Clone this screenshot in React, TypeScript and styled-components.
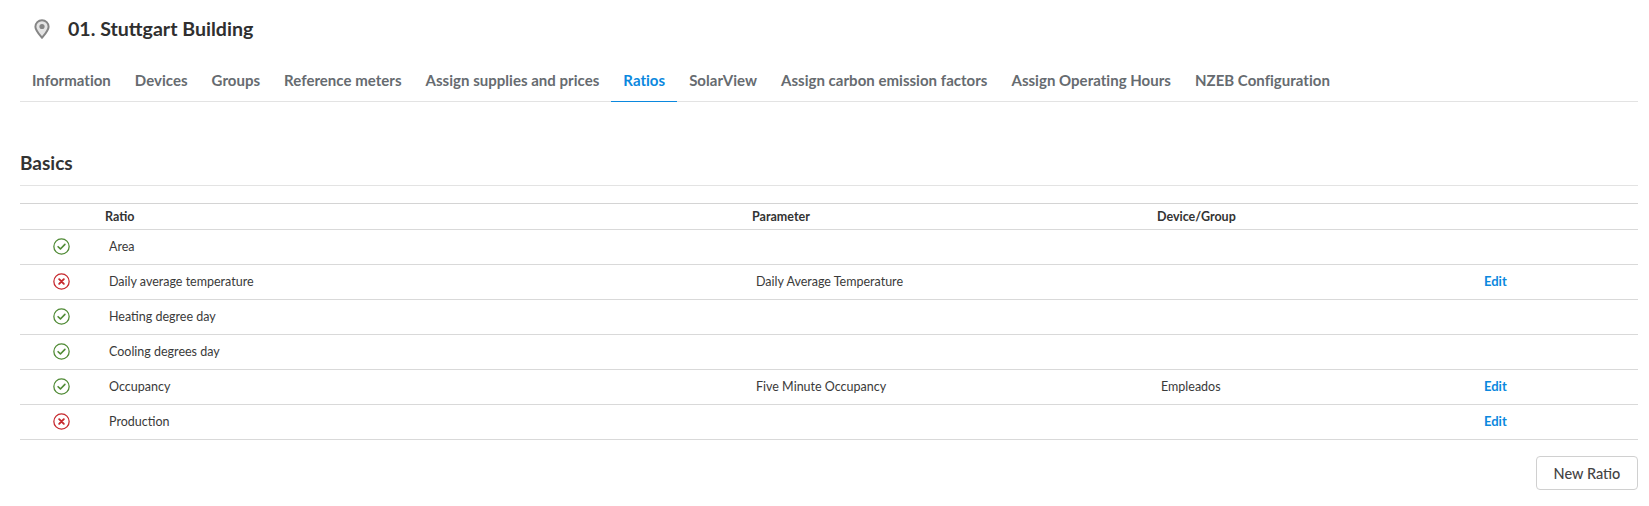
import * as React from 'react';
import styled, { createGlobalStyle } from 'styled-components';

const GlobalStyle = createGlobalStyle`
  html, body {
    margin: 0;
    background: #fff;
    font-family: "Lato", "Noto Sans", sans-serif;
    color: #333;
  }
`;

const Page = styled.div`
  width: 1649px;
  height: 506px;
  padding: 0 11px 0 20px;
  box-sizing: border-box;
  overflow: hidden;
`;

const Header = styled.div`
  display: flex;
  align-items: center;
  height: 58px;
  padding-left: 14px;
  gap: 18px;
`;

const Title = styled.h1`
  margin: 0 0 1px;
  font-size: 19.600px;
  font-weight: 700;
  color: #2f2f2f;
`;

const Tabs = styled.div`
  display: flex;
  height: 44px;
  box-sizing: border-box;
  border-bottom: 1px solid #e3e3e3;
`;

const Tab = styled.div<{ $active?: boolean }>`
  padding: 0 12px;
  line-height: 44px;
  height: 44px;
  box-sizing: border-box;
  font-size: 15px;
  font-weight: 700;
  letter-spacing: 0.025px;
  white-space: nowrap;
  color: ${p => (p.$active ? '#0b88de' : '#666b70')};
  border-bottom: 1px solid ${p => (p.$active ? '#0b88de' : 'transparent')};
`;

const SectionTitle = styled.h2`
  margin: 49px 0 0;
  height: 34px;
  font-size: 19px;
  line-height: 23px;
  font-weight: 700;
  color: #333;
  border-bottom: 1px solid #e3e3e3;
`;

const Table = styled.div`
  margin-top: 17px;
  border-top: 1px solid #d4d4d4;
`;

const Row = styled.div<{ $head?: boolean }>`
  display: grid;
  grid-template-columns: 85px 647px 405px 323px 1fr;
  align-items: center;
  height: ${p => (p.$head ? '25px' : '34px')};
  border-bottom: 1px solid #d9d9d9;
  box-sizing: content-box;
  font-size: 12.500px;
`;

const HeadCell = styled.div`
  font-weight: 700;
  color: #333;
`;

const Cell = styled.div`
  padding: 0 0 1px 4px;
  color: #3a3a3a;
`;

const ActionCell = styled(Cell)`
  padding-bottom: 2px;
`;

const StatusCell = styled.div`
  display: flex;
  justify-content: center;
  width: 82px;
  padding-bottom: 1px;
`;

const EditLink = styled.a`
  color: #0b88de;
  font-weight: 700;
  font-size: 13px;
  cursor: pointer;
`;

const Footer = styled.div`
  display: flex;
  justify-content: flex-end;
  margin-top: 16px;
`;

const Button = styled.button`
  width: 102px;
  height: 34px;
  background: #fff;
  border: 1px solid #d0d0d0;
  border-radius: 4px;
  font-family: inherit;
  font-size: 14.500px;
  font-weight: 500;
  color: #444;
`;

const PinIcon = () => (
  <svg width="16" height="20" viewBox="0 0 16 20">
    <path
      d="M8 1.200C4.300 1.200 1.400 4.100 1.400 7.700 1.400 11.400 5.700 15.800 8 18.700c2.300-2.900 6.600-7.300 6.600-11C14.600 4.100 11.700 1.200 8 1.200Z"
      fill="#e4e4e4"
      stroke="#858585"
      strokeWidth="2"
    />
    <circle cx="8" cy="7.500" r="2.600" fill="#858585" />
  </svg>
);

const StatusIcon = ({ ok }: { ok: boolean }) => {
  const color = ok ? '#4f8a34' : '#c6282d';
  return (
    <svg width="17" height="17" viewBox="0 0 16 16" fill="none" stroke={color} strokeLinecap="round" strokeLinejoin="round">
      <circle cx="8" cy="8" r="7.200" strokeWidth="1.200" />
      {ok ? (
        <path d="M4.800 8.200 7 10.300 11.200 6" strokeWidth="1.500" />
      ) : (
        <path d="M5.800 5.800 10.200 10.200M10.200 5.800 5.800 10.200" strokeWidth="1.800" />
      )}
    </svg>
  );
};

const tabs = [
  'Information',
  'Devices',
  'Groups',
  'Reference meters',
  'Assign supplies and prices',
  'Ratios',
  'SolarView',
  'Assign carbon emission factors',
  'Assign Operating Hours',
  'NZEB Configuration',
];

const rows = [
  { ok: true, name: 'Area', parameter: '', device: '', edit: false },
  { ok: false, name: 'Daily average temperature', parameter: 'Daily Average Temperature', device: '', edit: true },
  { ok: true, name: 'Heating degree day', parameter: '', device: '', edit: false },
  { ok: true, name: 'Cooling degrees day', parameter: '', device: '', edit: false },
  { ok: true, name: 'Occupancy', parameter: 'Five Minute Occupancy', device: 'Empleados', edit: true },
  { ok: false, name: 'Production', parameter: '', device: '', edit: true },
];

const App = () => (
  <Page>
    <GlobalStyle />
    <Header>
      <PinIcon />
      <Title>01. Stuttgart Building</Title>
    </Header>
    <Tabs>
      {tabs.map(tab => (
        <Tab key={tab} $active={tab === 'Ratios'}>{tab}</Tab>
      ))}
    </Tabs>
    <SectionTitle>Basics</SectionTitle>
    <Table>
      <Row $head>
        <div />
        <HeadCell>Ratio</HeadCell>
        <HeadCell>Parameter</HeadCell>
        <HeadCell>Device/Group</HeadCell>
        <div />
      </Row>
      {rows.map(row => (
        <Row key={row.name}>
          <StatusCell><StatusIcon ok={row.ok} /></StatusCell>
          <Cell>{row.name}</Cell>
          <Cell>{row.parameter}</Cell>
          <Cell>{row.device}</Cell>
          <ActionCell>{row.edit && <EditLink>Edit</EditLink>}</ActionCell>
        </Row>
      ))}
    </Table>
    <Footer>
      <Button>New Ratio</Button>
    </Footer>
  </Page>
);

export default App;
